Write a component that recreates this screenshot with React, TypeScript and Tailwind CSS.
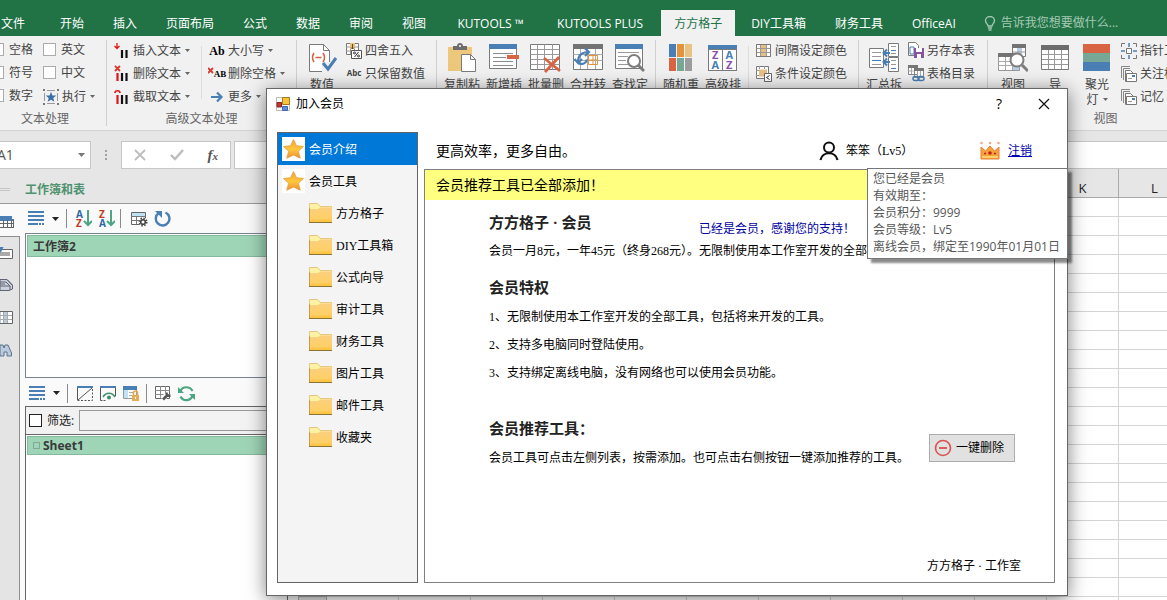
import React from "react";

type Kids = { children?: React.ReactNode };

function Svg({ w, h, children, className = "" }: Kids & { w: number; h: number; className?: string }) {
  return (
    <svg width={w} height={h} viewBox={`0 0 ${w} ${h}`} fill="none" className={`shrink-0 ${className}`} aria-hidden="true">
      {children}
    </svg>
  );
}

const GRAY = "#7a7a7a";
const BLUE = "#4a7fb5";

/* ---------- ribbon icons ---------- */

const InsertTextIcon = () => (
  <Svg w={16} h={18}>
    <path d="M3 1v5M0.5 4L3 6.5 5.5 4" stroke="#e01515" strokeWidth="1.3" />
    <path d="M8 8v8M12.500 8v8" stroke="#111" strokeWidth="2.200" />
  </Svg>
);
const DeleteTextIcon = () => (
  <Svg w={16} h={18}>
    <path d="M1 1l5 5M6 1L1 6" stroke="#d83b32" strokeWidth="1.800" />
    <path d="M3.500 8v8" stroke="#e01515" strokeWidth="2.200" />
    <path d="M8 8v8M12.500 8v8" stroke="#111" strokeWidth="2.200" />
  </Svg>
);
const CutTextIcon = () => (
  <Svg w={16} h={18}>
    <path d="M1 5c0-3 5-3 5 0" stroke="#e01515" strokeWidth="1.600" />
    <path d="M3.500 7v9" stroke="#e01515" strokeWidth="2.200" />
    <path d="M8 7v9M12.500 7v9" stroke="#111" strokeWidth="2.200" />
  </Svg>
);
const RunIcon = () => (
  <Svg w={16} h={16}>
    <path d="M1.500 4v8M14.500 4v8M4 1.500h8M4 14.500h8" stroke="#9a9a9a" strokeWidth="1" />
    <path d="M0 0h2v2H0zM14 0h2v2h-2zM0 14h2v2H0zM14 14h2v2h-2z" fill="#777" />
    <path d="M8 2.800l1.400 3.600 3.900.2-3 2.400 1 3.800L8 10.700l-3.300 2.100 1-3.800-3-2.400 3.900-.2z" fill="#3a6ea8" />
  </Svg>
);
const MoreIcon = () => (
  <Svg w={14} h={12}>
    <path d="M1 6h10M7 1.500L11.500 6 7 10.500" stroke={BLUE} strokeWidth="2.200" />
  </Svg>
);
const ValueIcon = () => (
  <Svg w={30} h={30}>
    <path d="M2.500 1.500h14l6 6v21h-20z" fill="#fff" stroke={GRAY} />
    <path d="M16.500 1.500v6h6" stroke={GRAY} />
    <path d="M7 10c-2 3-2 6 0 9M16 10c2 3 2 6 0 9M8.500 14.500h6" stroke="#d9603f" strokeWidth="1.600" />
    <path d="M15 19h12v10H15z" fill="#f1f1f1" />
    <path d="M16 20l5 6 8-11" stroke={BLUE} strokeWidth="3" />
  </Svg>
);
const RoundIcon = () => (
  <Svg w={16} h={17}>
    <path d="M.5 1.500h12v11H.5z" fill="#fff" stroke={GRAY} />
    <path d="M.5 5h12M.5 9h12M4.500 1.500v11M8.500 1.500v11" stroke="#999" />
    <path d="M4 1h5v6H4z" fill="#e9c07a" />
    <path d="M6.500 2v5M5 5.500l1.500 1.500L8 5.500" stroke="#5d4a22" />
    <path d="M5.500 8.500h10v8h-10z" fill="#fff" stroke="#555" />
    <circle cx="8.500" cy="11" r="1" stroke="#333" />
    <circle cx="12.500" cy="14" r="1" stroke="#333" />
    <path d="M12.500 10l-4 5" stroke="#333" />
  </Svg>
);
const PasteIcon = () => (
  <Svg w={30} h={30}>
    <path d="M1 4h24v24H1z" fill="#edc77c" />
    <path d="M6 3h4c0-4 6-4 6 0h4v4H6z" fill="#6c6c6c" />
    <circle cx="13" cy="3" r="1" fill="#fff" />
    <path d="M14.500 11.500h9l5 5v12h-14z" fill="#fff" stroke={GRAY} />
    <path d="M23.500 11.500v5h5" stroke={GRAY} />
  </Svg>
);
const InsertRowIcon = () => (
  <Svg w={30} h={30}>
    <path d="M.5 2.500h27v23H.5z" fill="#fff" stroke={GRAY} />
    <path d="M0 1h28v5H0z" fill={BLUE} />
    <path d="M4 10.500h20M4 14.500h13M4 18.500h20M4 22.500h20" stroke="#8c8c8c" />
    <path d="M18 12h12v4H18z" fill="#d96443" />
  </Svg>
);
const BatchDeleteIcon = () => (
  <Svg w={32} h={30}>
    <path d="M.5 1.500h29v25H.5z" fill="#fff" stroke={GRAY} />
    <path d="M.5 6.500h29M.5 11.500h29M.5 16.500h29M.5 21.500h29M7.500 1.500v25M14.500 1.500v25M22.500 1.500v25" stroke="#999" />
    <path d="M14 15l16 13M29 14L15 29" stroke="#d96443" strokeWidth="2.800" />
  </Svg>
);
const MergeIcon = () => (
  <Svg w={30} h={30}>
    <path d="M.5 1.500h29v25H.5z" fill="#fff" stroke={GRAY} />
    <path d="M0 1h30v5H0z" fill="#737373" />
    <path d="M.5 11.500h29M.5 17.500h29M7.500 6v20M14.500 6v20M22.500 6v20" stroke="#aaa" />
    <path d="M15.500 12.500h9v9h-9zM15.500 17h9M20 12v9" stroke="#e5923c" />
    <path d="M5 19c0-7 4-10 11-10M12 5.500l4 3.500-4 4M1.500 16l3.500 4 4-4M5 20.500c4 1 8 0 9-4" stroke={BLUE} strokeWidth="2.200" />
  </Svg>
);
const FindIcon = () => (
  <Svg w={30} h={30}>
    <path d="M.5 2.500h27v23H.5z" fill="#fff" stroke={GRAY} />
    <path d="M0 1h28v5H0z" fill={BLUE} />
    <path d="M3 9.500h21M3 13.500h10M3 17.500h8M3 21.500h10" stroke="#999" />
    <circle cx="19" cy="18" r="6" fill="#fff" stroke="#7d7d7d" strokeWidth="2" />
    <path d="M23 22l6 6" stroke="#7d7d7d" strokeWidth="3" />
  </Svg>
);
const RandomIcon = () => (
  <Svg w={24} h={30}>
    <path d="M0 1h7v13H0z" fill="#4a7fb5" />
    <path d="M8 1h7v13H8z" fill="#e5923c" />
    <path d="M16 1h7v13h-7z" fill="#e9c383" />
    <path d="M0 15h7v13H0z" fill="#d96443" />
    <path d="M8 15h7v13H8z" fill="#76a797" />
    <path d="M16 15h7v13h-7z" fill="#9d9d9d" />
  </Svg>
);
function SortGridIcon() {
  return (
    <span className="flex h-[30px] w-[30px] flex-col pt-0.5">
      <span className="h-1 w-[29px] shrink-0 bg-[#4a7fb5]" />
      <span className="grid h-[22px] w-[29px] grid-cols-2 border border-[#7a7a7a] bg-white text-center font-['Open_Sans','Noto_Sans',sans-serif] text-[11px] font-bold leading-[10px]">
        <span className="border-r border-[#7a7a7a] text-[#8a4fb0]">Z</span>
        <span className="text-[#4a7fb5]">A</span>
        <span className="border-r border-[#7a7a7a] text-[#4a7fb5]">A</span>
        <span className="text-[#8a4fb0]">Z</span>
      </span>
    </span>
  );
}
const IntervalIcon = () => (
  <Svg w={16} h={16}>
    <path d="M.5 1.500h14v12H.5z" fill="#fff" stroke={GRAY} />
    <path d="M5 1h5v13H5z" fill="#e6bf85" />
    <path d="M.5 5.500h14M.5 9.500h14M4.500 1.500v12M10.500 1.500v12" stroke="#999" />
    <path d="M.5 1.500h14v12H.5z" stroke={GRAY} />
  </Svg>
);
const ConditionIcon = () => (
  <Svg w={16} h={16}>
    <path d="M.5.500h12v12H.5z" fill="#fff" stroke={GRAY} />
    <path d="M3 3.500h8v7H3z" fill="#e6bf85" />
    <path d="M3.500 0v3M8.500 0v3M0 4.500h3M0 9.500h3" stroke="#999" />
    <path d="M8.500 7.500h7v8h-7z" fill="#fff" stroke="#666" />
    <path d="M13.500 9.500l-3 2 3 2" stroke="#333" />
  </Svg>
);
const SummaryIcon = () => (
  <Svg w={30} h={30}>
    <path d="M.5 5.500h14v19H.5z" fill="#fff" stroke={GRAY} />
    <path d="M3 9.500h9M3 13.500h9M3 21.500h9" stroke="#999" />
    <path d="M3 17.500h9" stroke={BLUE} />
    <path d="M19.500.500h10v13h-10zM19.500 14.500h10v14h-10z" fill="#fff" stroke={GRAY} />
    <path d="M22 3.500h5M22 10.500h5M22 17.500h5M22 21.500h5" stroke="#999" />
    <path d="M22 7.500h5M22 25.500h5" stroke={BLUE} />
    <path d="M21 10h-6M18 6.500L14.500 10l3.500 3.500M21 19h-6M18 15.500L14.500 19l3.500 3.500" stroke={BLUE} strokeWidth="2" />
  </Svg>
);
const SaveAsIcon = () => (
  <Svg w={17} h={17}>
    <path d="M.5.500h7l3 3v10H.5z" fill="#fff" stroke={GRAY} />
    <path d="M2 5h4v7H2z" stroke={BLUE} />
    <path d="M6 6h10v10H6z" fill="#8652a1" />
    <path d="M8 6h6v4H8zM9 12h4v4H9z" fill="#fff" />
  </Svg>
);
const CatalogIcon = () => (
  <Svg w={17} h={17}>
    <path d="M.5 1.500h9v8h-9zM6.500 4.500h9v8h-9z" fill="#fff" stroke="#888" />
    <path d="M0 0h10v3H0zM6 3h10v3H6z" fill="#777" />
    <path d="M3.500 3v6M.5 6h5M9.500 6v5M12.500 6v5" stroke="#aaa" />
    <rect x="5" y="11.500" width="6" height="4" rx="2" stroke={BLUE} strokeWidth="1.500" />
    <rect x="10" y="11.500" width="6" height="4" rx="2" stroke={BLUE} strokeWidth="1.500" />
  </Svg>
);
const ViewIcon = () => (
  <Svg w={30} h={30}>
    <path d="M14.500 2.500h13v11h-13z" fill="#fff" stroke={GRAY} />
    <path d="M14 1h14v4H14z" fill="#737373" />
    <path d="M19 5h5v9h-5z" fill="#b9cfe4" />
    <path d="M14.500 9h13M.5 11.500h21v16H.5z" stroke="#999" fill="#fff" />
    <path d="M0 10h20v4H0z" fill="#737373" />
    <path d="M.5 18.500h20M.5 22.500h20M7.500 14v13M14.500 14v13" stroke="#aaa" />
    <path d="M15 22h6v5h-6z" fill="#b9cfe4" />
    <circle cx="19" cy="17" r="6.500" fill="#fff" stroke="#7d7d7d" strokeWidth="2" />
    <path d="M24 22l6 6" stroke="#7d7d7d" strokeWidth="3" />
  </Svg>
);
const NavTableIcon = () => (
  <Svg w={30} h={30}>
    <path d="M1.500 2.500h27v24h-27z" fill="#fff" stroke={GRAY} />
    <path d="M1 2h28v5H1z" fill="#6c6c6c" />
    <path d="M2 11.500h26M2 16.500h26M2 21.500h26M8.500 7v19M14.500 7v19M21.500 7v19" stroke="#999" />
  </Svg>
);
const SpotlightIcon = () => (
  <Svg w={28} h={30}>
    <path d="M0 1h27v9H0z" fill="#d96443" />
    <path d="M0 10h27v9H0z" fill="#76a797" />
    <path d="M0 19h27v9H0z" fill="#4a7fb5" />
  </Svg>
);
const PointerIcon = () => (
  <Svg w={16} h={16}>
    <path d="M.5 4V.5H4M12 .5h3.500V4M15.500 12v3.500H12M4 15.500H.5V12" stroke="#777" />
    <path d="M5.500 5.500h5v5h-5z" fill="#fff" stroke="#777" />
    <path d="M8 0v4M8 12v4M0 8h4M12 8h4" stroke={BLUE} strokeWidth="1.500" />
  </Svg>
);
const FollowIcon = () => (
  <Svg w={16} h={16}>
    <path d="M.5 12V.5H9M2.500 14V2.500H9" stroke="#888" />
    <path d="M4.500 4.500h5l3 3v8h-8z" fill="#fff" stroke="#777" />
    <path d="M5.500 7.500h10v8h-10z" fill="#fff" stroke="#777" />
    <path d="M7 12.500h4" stroke="#999" />
    <path d="M11 9h3v2h-3z" fill={BLUE} />
  </Svg>
);

function Caret() {
  return (
    <Svg w={5} h={3} className="ml-1">
      <path d="M0 0h5L2.500 3z" fill="#666" />
    </Svg>
  );
}

/* ---------- ribbon parts ---------- */

function Tool({ icon, label, caret = false }: { icon: React.ReactNode; label: string; caret?: boolean }) {
  return (
    <button className="flex h-[23px] items-center whitespace-nowrap pt-0.5">
      <span className="mr-[3px] flex w-4 shrink-0 items-center justify-center">{icon}</span>
      {label}
      {caret && <Caret />}
    </button>
  );
}

function BigTool({ icon, label, second }: { icon: React.ReactNode; label: string; second?: string }) {
  return (
    <button className="flex w-[42px] shrink-0 flex-col items-center whitespace-nowrap pt-[5px] leading-[15px]">
      <span className="mb-1 flex h-[30px] items-center justify-center">{icon}</span>
      <span>{label}</span>
      {second && (
        <span className="flex items-center">
          {second}
          <Caret />
        </span>
      )}
    </button>
  );
}

function Tick({ label }: { label: string }) {
  return (
    <label className="flex h-[23px] items-center gap-[5px] whitespace-nowrap">
      <input type="checkbox" className="h-[13px] w-[13px] shrink-0 appearance-none border border-[#ababab] bg-white" />
      {label}
    </label>
  );
}

function Group({ className, title, children }: Kids & { className: string; title?: string }) {
  return (
    <section className={`flex shrink-0 flex-col pt-0.5 ${className}`}>
      <div className="flex h-[69px]">{children}</div>
      {title && <h2 className="h-[23px] text-center leading-[24px] text-[#666]">{title}</h2>}
    </section>
  );
}

const Divider = () => <div className="my-1 w-px shrink-0 bg-[#d0d0d0]" />;
const InnerDivider = () => <div className="my-2 w-px shrink-0 bg-[#dcdcdc]" />;

const TAB = "h-[26px] px-[13px] leading-[23px]";
const TABS = [
  { name: "开始", style: TAB },
  { name: "插入", style: TAB },
  { name: "页面布局", style: TAB },
  { name: "公式", style: TAB },
  { name: "数据", style: TAB },
  { name: "审阅", style: TAB },
  { name: "视图", style: TAB },
  { name: "KUTOOLS ™", style: "h-[26px] w-[97px] leading-[23px]" },
  { name: "KUTOOLS PLUS", style: "h-[26px] w-[116px] leading-[23px]" },
  { name: "方方格子", style: "h-[26px] bg-[#f1f1f1] px-[13px] leading-[23px] text-[#217346]" },
  { name: "DIY工具箱", style: TAB },
  { name: "财务工具", style: TAB },
  { name: "OfficeAI", style: TAB },
];

function TabBar() {
  return (
    <nav className="flex h-9 items-end gap-[3px] overflow-hidden whitespace-nowrap bg-[#217346] text-white">
      <button className="h-[26px] pl-px pr-[19px] leading-[23px]">文件</button>
      {TABS.map((t) => (
        <button key={t.name} className={t.style}>
          {t.name}
        </button>
      ))}
      <button className="flex h-[26px] items-center gap-[5px] pl-3 text-[#a6c9b5]">
        <Svg w={12} h={15}>
          <path d="M4 10c0-2-2.500-2.500-2.500-5.500a4.500 4 0 0 1 9 0c0 3-2.500 3.500-2.500 5.500zM4 12h4M4.500 14h3" stroke="#a6c9b5" strokeWidth="1.300" />
        </Svg>
        告诉我您想要做什么...
      </button>
    </nav>
  );
}

function Ribbon() {
  return (
    <div className="flex h-[95px] overflow-hidden border-b border-[#d2d2d2] bg-[#f1f1f1] text-[#444]">
      <Group className="-ml-4 w-[122px]" title="文本处理">
        <div className="ml-[7px] w-[52px] shrink-0">
          <Tick label="空格" />
          <Tick label="符号" />
          <Tick label="数字" />
        </div>
        <div>
          <Tick label="英文" />
          <Tick label="中文" />
          <Tool icon={<RunIcon />} label="执行" caret />
        </div>
      </Group>
      <Divider />
      <Group className="w-[189px]" title="高级文本处理">
        <div className="w-[94px] shrink-0 pl-[7px]">
          <Tool icon={<InsertTextIcon />} label="插入文本" caret />
          <Tool icon={<DeleteTextIcon />} label="删除文本" caret />
          <Tool icon={<CutTextIcon />} label="截取文本" caret />
        </div>
        <InnerDivider />
        <div className="pl-[7px]">
          <Tool icon={<span className="font-['Liberation_Serif',serif] font-bold text-black">Ab</span>} label="大小写" caret />
          <Tool
            icon={
              <span className="flex items-center font-['Liberation_Serif',serif] text-[9px] font-bold text-black">
                <Svg w={6} h={14}>
                  <path d="M0 1l5 5M5 1L0 6" stroke="#d83b32" strokeWidth="1.800" />
                </Svg>
                AB
              </span>
            }
            label="删除空格"
            caret
          />
          <Tool icon={<MoreIcon />} label="更多" caret />
        </div>
      </Group>
      <Divider />
      <Group className="w-[139px]">
        <div className="pl-1">
          <BigTool icon={<ValueIcon />} label="数值" />
        </div>
        <div className="pl-[3px]">
          <Tool icon={<RoundIcon />} label="四舍五入" />
          <Tool icon={<span className="text-[8px] font-bold">Abc</span>} label="只保留数值" />
        </div>
      </Group>
      <Divider />
      <Group className="w-[218px]">
        <div className="flex pl-1">
          <BigTool icon={<PasteIcon />} label="复制粘" />
          <BigTool icon={<InsertRowIcon />} label="新增插" />
          <BigTool icon={<BatchDeleteIcon />} label="批量删" />
          <BigTool icon={<MergeIcon />} label="合并转" />
          <BigTool icon={<FindIcon />} label="查找定" />
        </div>
      </Group>
      <Divider />
      <Group className="w-[202px]">
        <div className="flex w-[92px] shrink-0 pl-1">
          <BigTool icon={<RandomIcon />} label="随机重" />
          <BigTool icon={<SortGridIcon />} label="高级排" />
        </div>
        <InnerDivider />
        <div className="pl-[7px]">
          <Tool icon={<IntervalIcon />} label="间隔设定颜色" />
          <Tool icon={<ConditionIcon />} label="条件设定颜色" />
        </div>
      </Group>
      <Divider />
      <Group className="w-[128px]">
        <div className="pl-1">
          <BigTool icon={<SummaryIcon />} label="汇总拆" />
        </div>
        <div className="pl-[3px]">
          <Tool icon={<SaveAsIcon />} label="另存本表" />
          <Tool icon={<CatalogIcon />} label="表格目录" />
        </div>
      </Group>
      <Divider />
      <Group className="w-[235px]" title="视图">
        <div className="flex pl-1">
          <BigTool icon={<ViewIcon />} label="视图" />
          <BigTool icon={<NavTableIcon />} label="导" />
          <BigTool icon={<SpotlightIcon />} label="聚光" second="灯" />
        </div>
        <div className="pl-[3px]">
          <Tool icon={<PointerIcon />} label="指针工" />
          <Tool icon={<FollowIcon />} label="关注相" />
          <Tool icon={<FollowIcon />} label="记忆" />
        </div>
      </Group>
    </div>
  );
}

/* ---------- formula bar ---------- */

function FormulaBar() {
  return (
    <div className="flex h-[38px] shrink-0 pt-[10px]">
      <div className="flex w-[91px] items-center justify-between overflow-hidden border border-l-0 border-[#c6c6c6] bg-white pr-[5px] text-sm text-[#555]">
        <span className="-ml-[3px]">A1</span>
        <Svg w={7} h={4}>
          <path d="M0 0h7L3.500 4z" fill="#777" />
        </Svg>
      </div>
      <Svg w={30} h={28}>
        <path d="M14 9h2v2h-2zM14 13h2v2h-2zM14 17h2v2h-2z" fill="#a0a0a0" />
      </Svg>
      <div className="flex w-[110px] items-center justify-between border border-[#c6c6c6] bg-white pl-3 pr-3">
        <Svg w={12} h={12}>
          <path d="M1 1l10 10M11 1L1 11" stroke="#bdbdbd" strokeWidth="1.800" />
        </Svg>
        <Svg w={14} h={12}>
          <path d="M1 6l4 4 8-9" stroke="#bdbdbd" strokeWidth="2.400" />
        </Svg>
        <i className="font-['Liberation_Serif',serif] text-[15px] font-bold leading-4 text-[#555]">
          f<span className="text-[11px]">x</span>
        </i>
      </div>
      <input aria-label="编辑栏" className="ml-[3px] min-w-0 flex-1 border border-r-0 border-[#c6c6c6] bg-white" />
    </div>
  );
}

/* ---------- workbook pane ---------- */

const ListIcon = () => (
  <Svg w={16} h={15}>
    <path d="M0 1h16M0 5h16M0 9h16M0 13h10M11 13h2M14 13h2" stroke={BLUE} strokeWidth="2" />
  </Svg>
);
const DropIcon = () => (
  <Svg w={7} h={4}>
    <path d="M0 0h7L3.500 4z" fill="#222" />
  </Svg>
);
const ToolSep = () => <span className="h-[19px] w-px bg-[#8a8a8a]" />;

function AzIcon({ up, low, upColor, lowColor }: { up: string; low: string; upColor: string; lowColor: string }) {
  return (
    <span className="flex items-center">
      <span className="flex w-[7px] flex-col text-[10px] font-bold leading-[9px]">
        <span className={upColor}>{up}</span>
        <span className={lowColor}>{low}</span>
      </span>
      <Svg w={9} h={17}>
        <path d="M5 0v15M1 11L5 15 9 11" stroke="#4ca681" strokeWidth="2" />
      </Svg>
    </span>
  );
}
const TableGearIcon = () => (
  <Svg w={17} h={16}>
    <path d="M.5 1.500h14v12H.5z" fill="#fff" stroke="#666" />
    <path d="M1 2h13v3H1z" fill="#bfe3f5" />
    <path d="M0 5.500h15M0 9.500h9M5.500 5v8" stroke="#777" />
    <circle cx="12" cy="11" r="4.500" fill="#fafafa" />
    <circle cx="12" cy="11" r="2.300" stroke="#444" strokeWidth="1.600" />
    <circle cx="12" cy="11" r="3.800" stroke="#444" strokeWidth="1.500" strokeDasharray="1.500 1.480" />
  </Svg>
);
const ReloadIcon = () => (
  <Svg w={17} h={17}>
    <path d="M11.500 2.500a6.800 6.800 0 1 1-6.800.600" stroke={BLUE} strokeWidth="2.400" />
    <path d="M1 1h7v7z" fill={BLUE} />
  </Svg>
);
const HideIcon = () => (
  <Svg w={16} h={15}>
    <path d="M0 1h16" stroke={BLUE} strokeWidth="2" />
    <path d="M.5 2v12.500M15 2L1 14" stroke="#555" />
    <path d="M15.500 3v11.500H1" stroke="#555" strokeDasharray="2 1.500" />
  </Svg>
);
const ShowIcon = () => (
  <Svg w={16} h={15}>
    <path d="M0 1h16" stroke={BLUE} strokeWidth="2" />
    <path d="M.5 2v12.500M15.500 2v8" stroke="#555" />
    <path d="M.5 14.500h6" stroke="#555" strokeDasharray="2 1" />
    <path d="M3 11c3-5 9-5 12 0" stroke="#3f8f6c" strokeWidth="1.600" />
    <circle cx="9" cy="11.500" r="2" fill="#3f8f6c" />
  </Svg>
);
const LockIcon = () => (
  <Svg w={17} h={17}>
    <path d="M.5 2.500h13v11H.5z" fill="#fff" stroke="#999" />
    <path d="M0 1h14v4H0z" fill={BLUE} />
    <path d="M1 5h4v8H1z" fill="#bfe3f5" />
    <path d="M6 7.500h5M6 10.500h3" stroke="#aaa" />
    <path d="M10.500 10V8a2 2 0 0 1 4 0v2" stroke="#e0a64e" strokeWidth="1.500" />
    <path d="M9 10h7v6H9z" fill="#e6ad58" />
    <path d="M12 12h1v2h-1z" fill="#fff" />
  </Svg>
);
const WrenchTableIcon = () => (
  <Svg w={17} h={16}>
    <path d="M.5 1.500h14v12H.5z" fill="#fff" stroke="#666" />
    <path d="M0 5.500h15M0 9.500h15M5.500 1v12M10.500 1v12" stroke="#888" />
    <path d="M7 14l6-5" stroke="#fafafa" strokeWidth="5" />
    <path d="M8 14.500l5-5M11.500 7.500c0 3 1 3.500 4 3" stroke="#555" strokeWidth="2.500" />
  </Svg>
);
const SyncIcon = () => (
  <Svg w={17} h={17}>
    <path d="M2.500 6C4.500 1 12 1 14.500 6M14.500 11c-2.500 5.500-9.500 5.500-12 .5" stroke="#4ca681" strokeWidth="2.200" />
    <path d="M0 2v6h6zM17 15V9h-6z" fill="#4ca681" />
  </Svg>
);

function SideStrip() {
  return (
    <aside className="flex w-5 shrink-0 flex-col overflow-hidden">
      <div className="flex h-8 items-center bg-[#fafafa] pt-[3px]">
        <Svg w={14} h={12}>
          <path d="M0 1h12v3h2v8H0z" fill="#fff" />
          <path d="M0 0h12v3H0zM0 3h14v2H0z" fill={BLUE} />
          <path d="M0 7.500h14M0 11.500h14M3.500 4v7M7.500 4v7M11.500 4v7M13.500 3v9" stroke="#666" />
        </Svg>
      </div>
      <div className="flex flex-1 flex-col gap-5 border-r border-t border-[#8f8f8f] bg-[#e4e4e4] pt-[10px]">
        <Svg w={13} h={12}>
          <path d="M0 2.500h12.500v9H0" fill="#fff" stroke="#666" />
          <path d="M0 5h10v4H0z" fill="#aaa" />
          <path d="M0 5l2-4H0" stroke={BLUE} strokeWidth="2" />
        </Svg>
        <Svg w={13} h={12}>
          <path d="M0 .5h7L12.500 6v4L9 11.500H0z" fill="#cdd1dc" stroke="#5f6473" />
          <path d="M0 3h6l4 4H0M0 5h5M10 7v4M7 .5L12 6" stroke="#5f6473" />
        </Svg>
        <Svg w={13} h={13}>
          <path d="M0 .5h12.500v12H0" fill="#fff" stroke="#666" />
          <path d="M4 1h3v11H4zM0 1h1v11H0z" fill="#b9cbdc" />
          <path d="M0 4.500h12M0 8.500h12M3.500 1v11M7.500 1v11" stroke="#aaa" />
        </Svg>
        <Svg w={12} h={13}>
          <path d="M0 1h3l1 3 1-3h3l3.500 8v3H7V8H4v4H0z" fill="#b9cbdc" stroke="#5c748c" />
        </Svg>
      </div>
    </aside>
  );
}

function Pane() {
  return (
    <div className="flex w-[299px] shrink-0 flex-col border-r border-[#ababab]">
      <div className="flex h-[35px] shrink-0 items-center border-b border-[#9a9a9a] pt-[7px]">
        <span className="h-[3px] w-[10px] border-y border-[#c6c6c6]" />
        <h2 className="pl-[15px] font-bold text-[#4f9370]">工作簿和表</h2>
      </div>
      <div className="flex min-h-0 flex-1 bg-[#fafafa]">
        <SideStrip />
        <div className="flex flex-1 flex-col pl-[5px] pr-[10px]">
          <div className="flex h-[29px] shrink-0 items-center pl-[3px]">
            <ListIcon />
            <span className="ml-2 mr-[7px]">
              <DropIcon />
            </span>
            <ToolSep />
            <span className="flex items-center gap-[7px] pl-[9px] pr-[5px]">
              <AzIcon up="A" low="Z" upColor="text-[#2d68a5]" lowColor="text-[#c03a24]" />
              <AzIcon up="Z" low="A" upColor="text-[#c03a24]" lowColor="text-[#2d68a5]" />
            </span>
            <ToolSep />
            <span className="flex items-center gap-[6px] pl-[10px]">
              <TableGearIcon />
              <ReloadIcon />
            </span>
          </div>
          <div className="h-[145px] shrink-0 border border-[#7a8290] bg-white p-px">
            <div className="h-[22px] border border-[#86b89c] bg-[#9fd5b7] pl-[5px] font-bold leading-[21px] text-[#3a3a3a]">工作簿2</div>
          </div>
          <div className="flex h-[28px] shrink-0 items-center pl-1 pt-0.5">
            <ListIcon />
            <span className="ml-2 mr-[7px]">
              <DropIcon />
            </span>
            <ToolSep />
            <span className="flex items-center gap-[7px] pl-[9px] pr-[6px]">
              <HideIcon />
              <ShowIcon />
              <LockIcon />
            </span>
            <ToolSep />
            <span className="flex items-center gap-[6px] pl-2">
              <WrenchTableIcon />
              <SyncIcon />
            </span>
          </div>
          <div className="flex h-[28px] shrink-0 items-center border border-b-0 border-[#666] bg-[#f1f1f1] pl-[3px]">
            <label className="flex items-center gap-[5px]">
              <input type="checkbox" className="h-[13px] w-[13px] appearance-none border border-[#222] bg-white" />
              筛选:
            </label>
            <input aria-label="筛选内容" className="ml-[5px] h-[21px] min-w-0 flex-1 border border-[#9a9a9a] bg-[#f3f3f3]" />
          </div>
          <div className="flex-1 border border-b-0 border-[#666] bg-white p-px">
            <div className="flex h-[19px] items-center gap-[3px] border border-[#86b89c] bg-[#9fd5b7] pl-[5px] font-bold text-[#3a3a3a]">
              <span className="h-[7px] w-[7px] border border-[#84a894]" />
              Sheet1
            </div>
          </div>
        </div>
      </div>
    </div>
  );
}

/* ---------- worksheet ---------- */

const COLS = ["", "", "", "", "", "", "", "", "", "", "K", "L"];
const ROWS = Array.from({ length: 22 }, (_, i) => i + 1);

function Sheet() {
  return (
    <div className="min-w-0 flex-1 overflow-hidden">
      <table aria-label="工作表" className="w-[892px] table-fixed border-separate border-spacing-0 bg-white">
        <thead className="bg-[#e6e6e6]">
          <tr className="h-[29px]">
            <td className="w-[28px] border-b border-r border-[#ababab]" />
            {COLS.map((c, i) => (
              <th key={i} className="w-[72px] border-b border-r border-[#ababab] p-0 pt-[10px] text-[13px] font-normal leading-[18px] text-[#222]">
                {c}
              </th>
            ))}
          </tr>
        </thead>
        <tbody>
          {ROWS.map((r) => (
            <tr key={r} className="h-[19px]">
              <td className="border-b border-r border-[#ababab] bg-[#e6e6e6] p-0" />
              {COLS.map((_, i) => (
                <td key={i} className="border-b border-r border-[#d4d4d4] p-0" />
              ))}
            </tr>
          ))}
        </tbody>
      </table>
    </div>
  );
}

/* ---------- member dialog ---------- */

const StarIcon = () => (
  <Svg w={23} h={24} className="bg-white">
    <defs>
      <linearGradient id="star" x1="0" y1="0" x2="0" y2="1">
        <stop offset="0" stopColor="#f0a23a" />
        <stop offset=".55" stopColor="#ffc83c" />
        <stop offset="1" stopColor="#ee8a2c" />
      </linearGradient>
    </defs>
    <path d="M11.500 2.500l3 6.200 7 .8-5.200 4.700 2 7-6.800-3.200-6.800 3.200 2-7L1.500 9.500l7-.8z" fill="url(#star)" stroke="#e89a3c" strokeWidth=".8" strokeLinejoin="round" />
  </Svg>
);
const FolderIcon = () => (
  <Svg w={23} h={22}>
    <defs>
      <linearGradient id="folder" x1="0" y1="0" x2="0" y2="1">
        <stop offset="0" stopColor="#fbd07f" />
        <stop offset=".7" stopColor="#ffcf66" />
        <stop offset="1" stopColor="#fcbf2c" />
      </linearGradient>
    </defs>
    <path d="M.5 20V1.500h8l2.500 3h11.500V20z" fill="#fbf3a4" stroke="#e8c47c" />
    <path d="M0 7h9l2-1.500h12V21H0z" fill="url(#folder)" />
    <path d="M0 20.500h23" stroke="#8f7035" />
    <path d="M.5 6v14" stroke="#c79c4c" />
  </Svg>
);

const FOLDERS = ["方方格子", "DIY工具箱", "公式向导", "审计工具", "财务工具", "图片工具", "邮件工具", "收藏夹"];

function TreeItem({ className, icon, label }: { className: string; icon: React.ReactNode; label: string }) {
  return (
    <li className={`flex h-8 items-center ${className}`}>
      {icon}
      <span className="pl-1 pt-0.5">{label}</span>
    </li>
  );
}

function Tree() {
  return (
    <ul className="w-[141px] shrink-0 border border-[#646464] bg-[#f4f4f4]">
      <TreeItem className="bg-[#0078d7] pl-1 text-white" icon={<StarIcon />} label="会员介绍" />
      <TreeItem className="pl-1" icon={<StarIcon />} label="会员工具" />
      {FOLDERS.map((f) => (
        <TreeItem key={f} className="pl-[31px]" icon={<FolderIcon />} label={f} />
      ))}
    </ul>
  );
}

function Tooltip() {
  return (
    <div
      role="tooltip"
      className="absolute right-[-1px] top-[79px] w-[201px] whitespace-nowrap border border-[#767676] bg-white px-[5px] pb-[3px] pt-px font-['Open_Sans','Noto_Sans_CJK_SC',sans-serif] leading-[17px] text-[#575757] shadow-[4px_4px_2px_rgba(0,0,0,0.45)]"
    >
      <p>您已经是会员</p>
      <p>有效期至：</p>
      <p>会员积分：9999</p>
      <p>会员等级：Lv5</p>
      <p>离线会员，绑定至1990年01月01日</p>
    </div>
  );
}

function Dialog() {
  return (
    <div
      role="dialog"
      aria-label="加入会员"
      className="absolute left-[266px] top-[88px] flex h-[508px] w-[802px] flex-col border border-[#666] bg-white font-['Liberation_Serif','Noto_Sans_CJK_SC',serif] text-black shadow-[0_3px_18px_rgba(0,0,0,0.5)]"
    >
      <header className="flex h-[30px] shrink-0 items-center pl-[9px] pr-[17px] font-['Open_Sans','Noto_Sans_CJK_SC',sans-serif]">
        <Svg w={14} h={14}>
          <path d="M.5.500h13v13H.5z" fill="#fff" stroke="#bbb" />
          <path d="M6.500.500h7v7h-7z" fill="#f6c33c" stroke="#a87b1c" />
          <path d="M1 5.500h4.500V10H1z" fill="#c2382e" stroke="#8a241d" />
          <path d="M6.500 9.500h5v4h-5z" fill="#5b8fe0" stroke="#3e69b0" />
        </Svg>
        <h1 className="ml-[6px] flex-1">加入会员</h1>
        <button aria-label="帮助" className="text-sm">
          ?
        </button>
        <button aria-label="关闭" className="ml-9">
          <Svg w={12} h={12}>
            <path d="M1 1l10 10M11 1L1 11" stroke="#111" strokeWidth="1.200" />
          </Svg>
        </button>
      </header>
      <div className="flex min-h-0 flex-1 gap-[6px] pb-3 pl-[10px] pr-3 pt-[13px]">
        <Tree />
        <div className="flex min-w-0 flex-1 flex-col">
          <div className="flex h-[37px] shrink-0 items-center pl-3 pr-[23px]">
            <p className="flex-1 pt-0.5 text-sm">更高效率，更多自由。</p>
            <Svg w={20} h={20}>
              <circle cx="10" cy="6.500" r="5" stroke="#111" strokeWidth="2" />
              <path d="M1.500 19c2-9 15-9 17 0" stroke="#111" strokeWidth="2.200" />
            </Svg>
            <span className="ml-[7px] w-[134px]">笨笨（Lv5）</span>
            <Svg w={20} h={19}>
              <path d="M1 6l4.500 4L10 5l4.500 5L19 6v12H1z" fill="#f6a23c" stroke="#ea7f36" strokeLinejoin="round" />
              <path d="M2 15h16v2H2z" fill="#fccf68" />
              <circle cx="1.500" cy="2" r="1.300" fill="#f4a98a" />
              <circle cx="10" cy="2" r="1.300" fill="#f4a98a" />
              <circle cx="18.500" cy="2" r="1.300" fill="#f4a98a" />
              <circle cx="10" cy="12" r="1.800" fill="#c61f1f" />
              <path d="M4 12.500h2M14 12.500h2" stroke="#c61f1f" strokeWidth="1.600" />
            </Svg>
            <a href="#logout" className="ml-2 text-[#0000b4] underline">
              注销
            </a>
          </div>
          <main className="flex min-h-0 flex-1 flex-col border border-[#7f7f7f]">
            <p className="h-[30px] shrink-0 bg-[#ffff80] pl-[11px] text-sm leading-[32px]">会员推荐工具已全部添加！</p>
            <div className="flex flex-1 flex-col whitespace-nowrap pl-16">
              <div className="flex h-[37px] items-end">
                <h2 className="w-[210px] text-[15px] font-bold leading-[27px] text-[#222]">方方格子 · 会员</h2>
                <p className="leading-4 text-[#0000a0]">已经是会员，感谢您的支持！</p>
              </div>
              <p className="leading-7">会员一月8元，一年45元（终身268元）。无限制使用本工作室开发的全部工具。</p>
              <h2 className="mb-px mt-[9px] text-[15px] font-bold leading-7 text-[#222]">会员特权</h2>
              <ol className="leading-7">
                <li>1、无限制使用本工作室开发的全部工具，包括将来开发的工具。</li>
                <li>2、支持多电脑同时登陆使用。</li>
                <li>3、支持绑定离线电脑，没有网络也可以使用会员功能。</li>
              </ol>
              <div className="mt-7 flex items-center justify-between pr-[39px]">
                <div className="leading-7">
                  <h2 className="mb-px text-[15px] font-bold text-[#222]">会员推荐工具：</h2>
                  <p>会员工具可点击左侧列表，按需添加。也可点击右侧按钮一键添加推荐的工具。</p>
                </div>
                <button className="mt-2 flex h-7 w-[86px] items-center gap-1 border border-[#adadad] bg-[#e1e1e1] pl-1">
                  <Svg w={18} h={18}>
                    <circle cx="9" cy="9" r="7.500" stroke="#dc5050" strokeWidth="1.600" />
                    <path d="M5 9h8" stroke="#dc5050" strokeWidth="1.800" />
                  </Svg>
                  一键删除
                </button>
              </div>
              <p className="mb-[6px] mt-auto pr-[33px] text-right leading-5">方方格子 · 工作室</p>
            </div>
          </main>
        </div>
      </div>
      <Tooltip />
    </div>
  );
}

export default function App() {
  return (
    <div className="relative flex h-screen flex-col overflow-hidden bg-[#e6e6e6] font-['Open_Sans','Noto_Sans_CJK_SC',sans-serif] text-xs text-[#222]">
      <TabBar />
      <Ribbon />
      <FormulaBar />
      <div className="flex min-h-0 flex-1">
        <Pane />
        <Sheet />
      </div>
      <Dialog />
    </div>
  );
}
